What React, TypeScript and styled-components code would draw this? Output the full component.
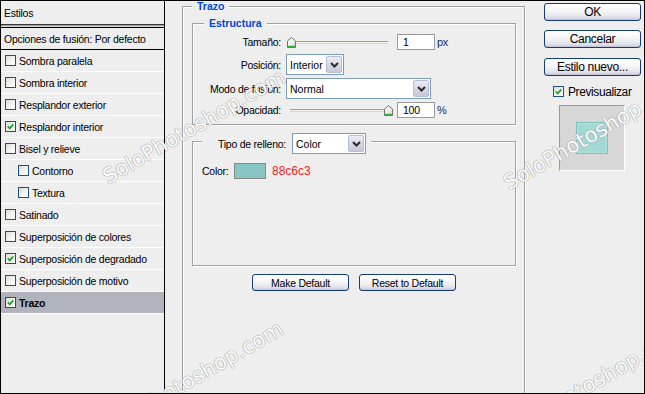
import React from "react";
import styled, { createGlobalStyle } from "styled-components";

const FONT = `"Liberation Sans", Arial, Helvetica, sans-serif`;

const GlobalStyle = createGlobalStyle`
  html, body { margin: 0; padding: 0; background: #eeeeee; }
  #root { width: 645px; height: 394px; }
`;

const Window = styled.div`
  position: relative;
  width: 645px;
  height: 394px;
  box-sizing: border-box;
  border: 1px solid #000;
  background: #eeeeee;
  display: flex;
  align-items: flex-start;
  overflow: hidden;
  font-family: ${FONT};
  font-size: 10.5px;
  letter-spacing: -0.25px;
  color: #000;
`;

/* ---------- left styles list ---------- */
const StylesPanel = styled.div`
  width: 164px;
  height: 100%;
  flex: none;
  box-sizing: border-box;
  border-right: 1px solid #000;
  display: flex;
  flex-direction: column;
`;

const PanelTitle = styled.div`
  height: 24px;
  box-sizing: border-box;
  padding-left: 3px;
  display: flex;
  align-items: center;
  border-bottom: 1px solid #3a3a3a;
`;

const TitleRule = styled.div`
  height: 2px;
  background: linear-gradient(#a0a0a0 50%, #dcdcdc 50%);
`;

const BlendRow = styled.div`
  height: 23px;
  box-sizing: border-box;
  border-top: 1px solid #000;
  border-bottom: 1px solid #000;
  padding-left: 3px;
  display: flex;
  align-items: center;
`;

const EffectRow = styled.div<{ $indent?: boolean; $selected?: boolean }>`
  height: 22px;
  box-sizing: border-box;
  border-bottom: 1px solid #ffffff;
  padding-left: ${(p) => (p.$indent ? 17 : 4)}px;
  display: flex;
  align-items: center;
  gap: 3px;
  background: ${(p) => (p.$selected ? "#b1b3bf" : "transparent")};
  font-weight: ${(p) => (p.$selected ? "bold" : "normal")};
`;

const CheckBox = styled.span`
  width: 11px;
  height: 11px;
  box-sizing: border-box;
  flex: none;
  border: 1px solid #1c5180;
  background: linear-gradient(135deg, #dcdcd6 0%, #f3f3f0 55%, #ffffff 100%);
  display: inline-flex;
  align-items: center;
  justify-content: center;
`;

const Check = ({ on }: { on: boolean }) => (
  <CheckBox>
    {on && (
      <svg width="7" height="7" viewBox="0 0 7 7">
        <path d="M0.8 3.4 L2.8 5.4 L6.3 1.4" fill="none" stroke="#21a121" strokeWidth="1.7" />
      </svg>
    )}
  </CheckBox>
);

/* ---------- main area ---------- */
const Main = styled.div`
  flex: none;
  width: 360px;
  padding: 5px 0 0 17px;
  box-sizing: border-box;
`;

const GroupBox = styled.div<{ $w: number; $h: number }>`
  position: relative;
  box-sizing: border-box;
  width: ${(p) => p.$w}px;
  height: ${(p) => p.$h}px;
  border: 1px solid #a0a0a0;
  box-shadow: inset 1px 1px 0 #ffffff, 1px 1px 0 #ffffff;
`;

const TrazoBox = styled(GroupBox)`
  padding: 16px 8px 0 9px;
`;

const StructureBox = styled(GroupBox)`
  padding-top: 10px;
`;

const FillBox = styled(GroupBox)`
  margin-top: 16px;
  padding: 21px 0 0 9px;
`;

const Legend = styled.div<{ $left: number; $top: number }>`
  position: absolute;
  left: ${(p) => p.$left}px;
  top: ${(p) => p.$top}px;
  padding: 0 5px;
  line-height: 13px;
  background: #eeeeee;
  color: #0046d5;
  font-weight: bold;
  letter-spacing: 0;
`;

const FillLegend = styled.div`
  position: absolute;
  left: 9px;
  top: -9px;
  height: 21px;
  padding: 0 5px 0 16px;
  background: #eeeeee;
  display: flex;
  align-items: center;
  gap: 6px;
`;

const FieldRow = styled.div<{ $h: number; $mt: number }>`
  display: flex;
  align-items: center;
  height: ${(p) => p.$h}px;
  margin-top: ${(p) => p.$mt}px;
`;

const FieldLabel = styled.span`
  width: 88px;
  flex: none;
  text-align: right;
  margin-right: 5px;
`;

const Slider = styled.div`
  position: relative;
  width: 108px;
  height: 16px;
  flex: none;
`;

const SliderTrack = styled.div`
  position: absolute;
  left: 4px;
  right: 6px;
  top: 7px;
  height: 3px;
  box-sizing: border-box;
  border-top: 1px solid #9c9c9c;
  border-bottom: 1px solid #d6d6d6;
  background: #f7f5e9;
`;

const SliderThumb = styled.svg<{ $left: number }>`
  position: absolute;
  top: 3px;
  left: ${(p) => p.$left}px;
`;

const SliderControl = ({ value, max }: { value: number; max: number }) => (
  <Slider>
    <SliderTrack />
    <SliderThumb $left={Math.round(1 + (value / max) * 97)} width="9" height="11" viewBox="0 0 9 11">
      <defs>
        <linearGradient id="thumbFill" x1="0" y1="0" x2="1" y2="1">
          <stop offset="0" stopColor="#ffffff" />
          <stop offset="1" stopColor="#d8dcd8" />
        </linearGradient>
      </defs>
      <polygon points="0.5,4 4.5,0.5 8.5,4 8.5,10.5 0.5,10.5" fill="url(#thumbFill)" stroke="#707070" />
      <rect x="1" y="8.8" width="7" height="1.7" fill="#33b133" />
    </SliderThumb>
  </Slider>
);

const NumberField = styled.div`
  width: 38px;
  height: 16px;
  box-sizing: border-box;
  margin-left: 3px;
  border: 1px solid #9a9a9a;
  background: #ffffff;
  padding-left: 5px;
  display: flex;
  align-items: center;
  flex: none;
`;

const Unit = styled.span`
  margin-left: 2px;
  color: #1a2a6a;
  font-size: 11px;
`;

const Select = styled.div<{ $w: number; $h: number }>`
  width: ${(p) => p.$w}px;
  height: ${(p) => p.$h}px;
  box-sizing: border-box;
  flex: none;
  border: 1px solid #7f9db9;
  background: #ffffff;
  display: flex;
  align-items: center;
  padding-left: 3px;
  letter-spacing: 0;
`;

const SelectButton = styled.span`
  margin: 1px 1px 1px auto;
  align-self: stretch;
  width: 16px;
  box-sizing: border-box;
  border: 1px solid #b3bfd8;
  border-radius: 2px;
  background: linear-gradient(#ececf2, #c7c7d9);
  display: flex;
  align-items: center;
  justify-content: center;
`;

const Dropdown = ({ w, h, value }: { w: number; h: number; value: string }) => (
  <Select $w={w} $h={h}>
    {value}
    <SelectButton>
      <svg width="9" height="6" viewBox="0 0 9 6">
        <path d="M1 1 L4.5 4.5 L8 1" fill="none" stroke="#2a2a2a" strokeWidth="2" />
      </svg>
    </SelectButton>
  </Select>
);

const ColorRow = styled.div`
  display: flex;
  align-items: center;
  height: 16px;
`;

const ColorLabel = styled.span`
  width: 32px;
  flex: none;
`;

const Swatch = styled.span<{ $color: string }>`
  width: 32px;
  height: 16px;
  box-sizing: border-box;
  border: 1px solid #8a8a8a;
  background: ${(p) => p.$color};
  flex: none;
`;

const HexText = styled.span`
  margin-left: 6px;
  color: #f21d1d;
  font-size: 12px;
  letter-spacing: 0;
`;

const DefaultsRow = styled.div`
  margin-top: 8px;
  display: flex;
  justify-content: center;
  gap: 10px;
`;

const PushButton = styled.div<{ $h: number; $size: number; $mt?: number }>`
  width: 97px;
  height: ${(p) => p.$h}px;
  margin-top: ${(p) => p.$mt ?? 0}px;
  box-sizing: border-box;
  flex: none;
  border: 1px solid #153d6f;
  border-radius: 3px;
  background: linear-gradient(#ffffff 0%, #f7f7f9 40%, #e6e6ee 75%, #cdcddf 100%);
  box-shadow: inset 0 -1px 0 #c4c4d8;
  display: flex;
  align-items: center;
  justify-content: center;
  font-size: ${(p) => p.$size}px;
`;

/* ---------- right column ---------- */
const Side = styled.div`
  flex: none;
  width: 97px;
  margin-left: 19px;
  padding-top: 2px;
  display: flex;
  flex-direction: column;
  font-size: 12px;
  letter-spacing: -0.3px;
`;

const PreviewToggle = styled.div`
  margin-top: 10px;
  padding-left: 9px;
  height: 11px;
  display: flex;
  align-items: center;
  gap: 4px;
  letter-spacing: -0.4px;
`;

const PreviewWell = styled.div`
  margin: 8px 0 0 15px;
  width: 66px;
  height: 66px;
  box-sizing: border-box;
  border: 1px solid;
  border-color: #9a9a9a #ffffff #ffffff #9a9a9a;
  background: #d7d7d7;
  display: flex;
  align-items: center;
  justify-content: center;
`;

const PreviewSquare = styled.div`
  width: 32px;
  height: 32px;
  box-sizing: border-box;
  border: 1px solid #7fc2bd;
  background: #a2d9d5;
  box-shadow: inset 0 0 3px #c9ede9;
`;

/* ---------- watermark overlay ---------- */
const Watermark = styled.div<{ $x: number; $y: number }>`
  position: absolute;
  left: ${(p) => p.$x}px;
  top: ${(p) => p.$y}px;
  pointer-events: none;
  white-space: nowrap;
  font-family: "DejaVu Sans", Verdana, sans-serif;
  font-size: 21px;
  line-height: 21px;
  letter-spacing: 0;
  color: #fdfdfd;
  text-shadow: 0 0 1px #9a9a9a, 0 0 1px #9a9a9a, 0 0 1px #b0b0b0;
  transform: rotate(-30deg);
  transform-origin: 0 100%;
`;

const effects: { label: string; on: boolean; indent?: boolean; selected?: boolean }[] = [
  { label: "Sombra paralela", on: false },
  { label: "Sombra interior", on: false },
  { label: "Resplandor exterior", on: false },
  { label: "Resplandor interior", on: true },
  { label: "Bisel y relieve", on: false },
  { label: "Contorno", on: false, indent: true },
  { label: "Textura", on: false, indent: true },
  { label: "Satinado", on: false },
  { label: "Superposición de colores", on: false },
  { label: "Superposición de degradado", on: true },
  { label: "Superposición de motivo", on: false },
  { label: "Trazo", on: true, selected: true },
];

const watermarks = [
  { x: 109, y: 166 },
  { x: 107, y: 418 },
  { x: 510, y: 172 },
  { x: 508, y: 422 },
];

export default function App() {
  return (
    <>
      <GlobalStyle />
      <Window>
        <StylesPanel>
          <PanelTitle>Estilos</PanelTitle>
          <TitleRule />
          <BlendRow>Opciones de fusión: Por defecto</BlendRow>
          {effects.map((e) => (
            <EffectRow key={e.label} $indent={e.indent} $selected={e.selected}>
              <Check on={e.on} />
              {e.label}
            </EffectRow>
          ))}
        </StylesPanel>

        <Main>
          <TrazoBox $w={343} $h={400}>
            <Legend $left={9} $top={-7}>Trazo</Legend>
            <StructureBox $w={324} $h={102}>
              <Legend $left={11} $top={-7}>Estructura</Legend>
              <FieldRow $h={16} $mt={0}>
                <FieldLabel>Tamaño:</FieldLabel>
                <SliderControl value={1} max={250} />
                <NumberField>1</NumberField>
                <Unit>px</Unit>
              </FieldRow>
              <FieldRow $h={21} $mt={4}>
                <FieldLabel>Posición:</FieldLabel>
                <Dropdown w={58} h={21} value="Interior" />
              </FieldRow>
              <FieldRow $h={21} $mt={3}>
                <FieldLabel>Modo de fusión:</FieldLabel>
                <Dropdown w={145} h={21} value="Normal" />
              </FieldRow>
              <FieldRow $h={16} $mt={3}>
                <FieldLabel>Opacidad:</FieldLabel>
                <SliderControl value={100} max={100} />
                <NumberField>100</NumberField>
                <Unit>%</Unit>
              </FieldRow>
            </StructureBox>

            <FillBox $w={324} $h={125}>
              <FillLegend>
                Tipo de relleno:
                <Dropdown w={74} h={21} value="Color" />
              </FillLegend>
              <ColorRow>
                <ColorLabel>Color:</ColorLabel>
                <Swatch $color="#88c6c3" />
                <HexText>88c6c3</HexText>
              </ColorRow>
            </FillBox>

            <DefaultsRow>
              <PushButton $h={17} $size={10.5}>Make Default</PushButton>
              <PushButton $h={17} $size={10.5}>Reset to Default</PushButton>
            </DefaultsRow>
          </TrazoBox>
        </Main>

        <Side>
          <PushButton $h={18} $size={12}>OK</PushButton>
          <PushButton $h={18} $size={12} $mt={9}>Cancelar</PushButton>
          <PushButton $h={18} $size={12} $mt={10}>Estilo nuevo...</PushButton>
          <PreviewToggle>
            <Check on={true} />
            Previsualizar
          </PreviewToggle>
          <PreviewWell>
            <PreviewSquare />
          </PreviewWell>
        </Side>

        {watermarks.map((w, i) => (
          <Watermark key={i} $x={w.x} $y={w.y}>
            SoloPhotoshop.com
          </Watermark>
        ))}
      </Window>
    </>
  );
}
